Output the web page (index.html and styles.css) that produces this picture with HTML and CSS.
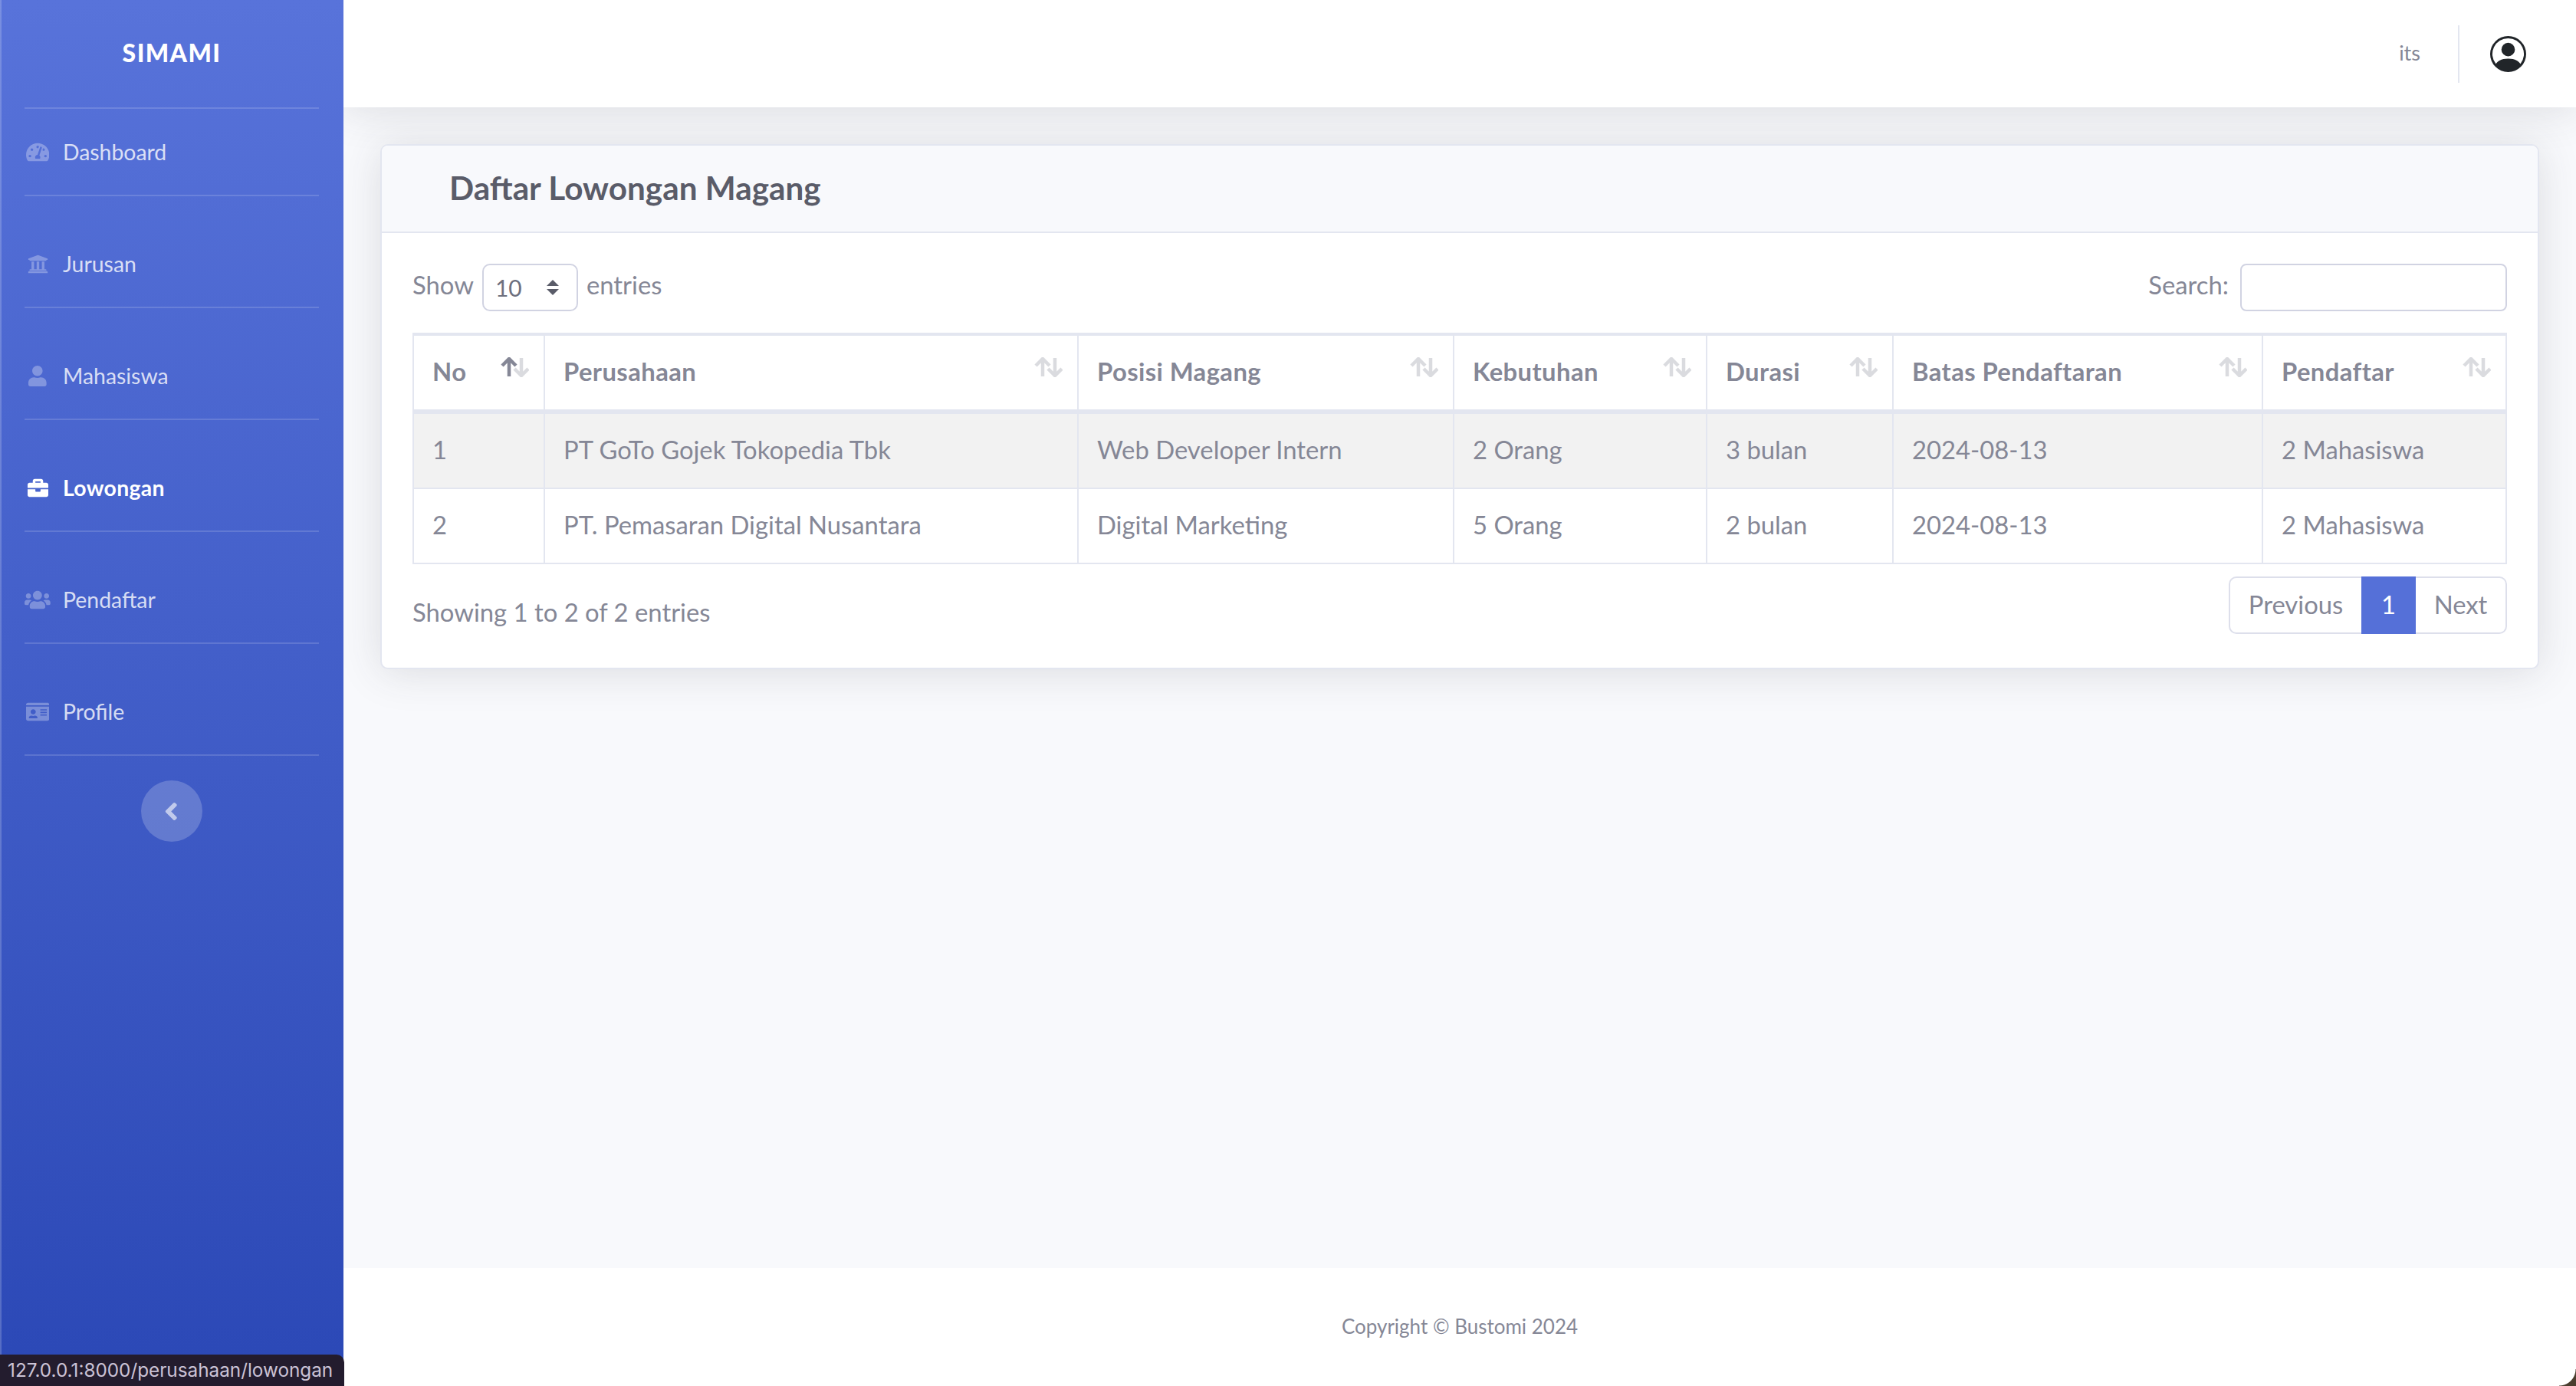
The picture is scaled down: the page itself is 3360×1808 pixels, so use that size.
FILE: index.html
```html
<!DOCTYPE html>
<html>
<head>
	<meta charset="UTF-8">
	<title>SIMAMI - Daftar Lowongan Magang</title>
	<link rel="stylesheet" href="styles.css">
</head>
<body>
	<svg class="sprite" width="0" height="0">
		<symbol id="sort" viewBox="0 0 37 26">
			<path class="up" d="M11 25V3M2 11l9-9 9 9"/>
			<path class="down" d="M27 1v22M18 15l9 9 9-9"/>
		</symbol>
	</svg>
	<div class="wrapper">
		<aside class="sidebar">
			<a class="brand" href="#">SIMAMI</a>
			<ul class="nav">
				<li class="nav-item">
					<a class="nav-link" href="#">
						<span class="nav-icon"><svg viewBox="0 0 576 512"><path d="M288 32C128.94 32 0 160.94 0 320c0 52.8 14.25 102.26 39.06 144.8 5.61 9.62 16.3 15.2 27.44 15.2h443c11.14 0 21.83-5.58 27.44-15.2C561.75 422.26 576 372.8 576 320c0-159.06-128.94-288-288-288zm0 64c14.71 0 26.58 10.13 30.32 23.65-1.11 2.26-2.64 4.23-3.45 6.67l-9.22 27.67c-5.13 3.49-10.97 6.01-17.64 6.01-17.67 0-32-14.33-32-32S270.33 96 288 96zM96 384c-17.67 0-32-14.33-32-32s14.33-32 32-32 32 14.33 32 32-14.33 32-32 32zm48-160c-17.67 0-32-14.33-32-32s14.33-32 32-32 32 14.33 32 32-14.33 32-32 32zm246.77-72.41l-61.33 184C343.13 347.33 352 364.54 352 384c0 11.72-3.38 22.55-8.88 32H232.88c-5.5-9.45-8.88-20.28-8.88-32 0-33.94 26.5-61.43 59.9-63.59l61.34-184.01c4.17-12.56 17.73-19.45 30.36-15.17 12.57 4.19 19.35 17.77 15.17 30.36zm14.66 57.2l15.52-46.55c3.47-1.29 7.13-2.23 11.05-2.23 17.67 0 32 14.33 32 32s-14.33 32-32 32c-11.38-.01-20.89-6.28-26.57-15.22zM480 384c-17.67 0-32-14.33-32-32s14.33-32 32-32 32 14.33 32 32-14.33 32-32 32z"/></svg></span>
						<span>Dashboard</span>
					</a>
				</li>
				<li class="nav-item">
					<a class="nav-link" href="#">
						<span class="nav-icon"><svg viewBox="0 0 512 512"><path d="M496 128v16a8 8 0 0 1-8 8h-24v12c0 6.627-5.373 12-12 12H60c-6.627 0-12-5.373-12-12v-12H24a8 8 0 0 1-8-8v-16a8 8 0 0 1 4.941-7.392l232-88a7.996 7.996 0 0 1 6.118 0l232 88A8 8 0 0 1 496 128zm-24 304H40c-13.255 0-24 10.745-24 24v16a8 8 0 0 0 8 8h464a8 8 0 0 0 8-8v-16c0-13.255-10.745-24-24-24zM96 192v192H60c-6.627 0-12 5.373-12 12v20h416v-20c0-6.627-5.373-12-12-12h-36V192h-64v192h-64V192h-64v192h-64V192H96z"/></svg></span>
						<span>Jurusan</span>
					</a>
				</li>
				<li class="nav-item">
					<a class="nav-link" href="#">
						<span class="nav-icon"><svg viewBox="0 0 448 512"><path d="M224 256c70.7 0 128-57.3 128-128S294.7 0 224 0 96 57.3 96 128s57.3 128 128 128zm89.6 32h-16.7c-22.2 10.2-46.9 16-72.9 16s-50.6-5.8-72.9-16h-16.7C60.2 288 0 348.2 0 422.4V464c0 26.5 21.5 48 48 48h352c26.5 0 48-21.5 48-48v-41.6c0-74.2-60.2-134.4-134.4-134.4z"/></svg></span>
						<span>Mahasiswa</span>
					</a>
				</li>
				<li class="nav-item active">
					<a class="nav-link" href="#">
						<span class="nav-icon"><svg viewBox="0 0 512 512"><path d="M320 336c0 8.84-7.16 16-16 16h-96c-8.84 0-16-7.16-16-16v-48H0v144c0 25.6 22.4 48 48 48h416c25.6 0 48-22.4 48-48V288H320v48zm144-208h-80V80c0-25.6-22.4-48-48-48H176c-25.6 0-48 22.4-48 48v48H48c-25.6 0-48 22.4-48 48v80h512v-80c0-25.6-22.4-48-48-48zm-144 0H192V96h128v32z"/></svg></span>
						<span>Lowongan</span>
					</a>
				</li>
				<li class="nav-item">
					<a class="nav-link" href="#">
						<span class="nav-icon"><svg viewBox="0 0 640 512"><path d="M96 224c35.3 0 64-28.7 64-64s-28.7-64-64-64-64 28.7-64 64 28.7 64 64 64zm448 0c35.3 0 64-28.7 64-64s-28.7-64-64-64-64 28.7-64 64 28.7 64 64 64zm32 32h-64c-17.6 0-33.5 7.1-45.1 18.6 40.3 22.1 68.9 62 75.1 109.4h66c17.7 0 32-14.3 32-32v-32c0-35.3-28.7-64-64-64zm-256 0c61.9 0 112-50.1 112-112S381.9 32 320 32 208 82.1 208 144s50.1 112 112 112zm76.8 32h-8.3c-20.8 10-43.9 16-68.5 16s-47.6-6-68.5-16h-8.3C179.6 288 128 339.6 128 403.2V432c0 26.5 21.5 48 48 48h288c26.5 0 48-21.5 48-48v-28.8c0-63.6-51.6-115.2-115.2-115.2zm-223.7-13.4C161.5 263.1 145.6 256 128 256H64c-35.3 0-64 28.7-64 64v32c0 17.7 14.3 32 32 32h65.9c6.3-47.4 34.9-87.3 75.2-109.4z"/></svg></span>
						<span>Pendaftar</span>
					</a>
				</li>
				<li class="nav-item">
					<a class="nav-link" href="#">
						<span class="nav-icon"><svg viewBox="0 0 576 512"><path d="M528 32H48C21.5 32 0 53.5 0 80v16h576V80c0-26.5-21.5-48-48-48zM0 432c0 26.5 21.500 48 48 48h480c26.500 0 48-21.500 48-48V128H0v304zm352-232c0-4.400 3.600-8 8-8h144c4.400 0 8 3.600 8 8v16c0 4.400-3.600 8-8 8H360c-4.400 0-8-3.600-8-8v-16zm0 64c0-4.400 3.600-8 8-8h144c4.400 0 8 3.600 8 8v16c0 4.400-3.600 8-8 8H360c-4.400 0-8-3.600-8-8v-16zm0 64c0-4.400 3.600-8 8-8h144c4.400 0 8 3.600 8 8v16c0 4.400-3.600 8-8 8H360c-4.400 0-8-3.600-8-8v-16zM176 192c35.300 0 64 28.700 64 64s-28.700 64-64 64-64-28.700-64-64 28.700-64 64-64zM67.100 396.200C75.500 370.500 99.600 352 128 352h8.200c12.300 5.100 25.700 8 39.800 8s27.600-2.900 39.800-8h8.200c28.400 0 52.500 18.500 60.900 44.200 3.200 9.900-5.200 19.800-15.600 19.800H82.700c-10.400 0-18.800-10-15.600-19.800z"/></svg></span>
						<span>Profile</span>
					</a>
				</li>
			</ul>
			<button class="sidebar-toggle" type="button">
				<svg viewBox="0 0 256 512"><path d="M31.700 239l136-136c9.400-9.400 24.600-9.400 33.900 0l22.600 22.600c9.400 9.400 9.400 24.600 0 33.900L127.900 256l96.400 96.400c9.400 9.400 9.400 24.600 0 33.900L201.700 409c-9.400 9.400-24.600 9.400-33.900 0l-136-136c-9.500-9.400-9.500-24.600-.1-34z"/></svg>
			</button>
		</aside>

		<div class="main">
			<header class="topbar">
				<span class="user-name">its</span>
				<span class="topbar-divider"></span>
				<svg class="user-icon" viewBox="0 0 16 16">
					<path d="M11 6a3 3 0 1 1-6 0 3 3 0 0 1 6 0"/>
					<path fill-rule="evenodd" d="M0 8a8 8 0 1 1 16 0A8 8 0 0 1 0 8m8-7a7 7 0 0 0-5.468 11.37C3.242 11.226 4.805 10 8 10s4.757 1.225 5.468 2.37A7 7 0 0 0 8 1"/>
				</svg>
			</header>

			<div class="content">
				<section class="card">
					<div class="card-header">
						<h1>Daftar Lowongan Magang</h1>
					</div>
					<div class="card-body">
						<div class="table-tools">
							<label class="length">
								Show
								<span class="select-wrap">
									<select>
										<option>10</option>
									</select>
									<svg class="select-arrows" viewBox="0 0 16 20"><path d="M8 0l8 8H0zM8 20L0 12h16z"/></svg>
								</span>
								entries
							</label>
							<label class="search">
								Search:
								<input type="text">
							</label>
						</div>

						<table class="data-table">
							<thead>
								<tr>
									<th class="col-no sorted">No<svg class="sort-icon"><use href="#sort"/></svg></th>
									<th class="col-company">Perusahaan<svg class="sort-icon"><use href="#sort"/></svg></th>
									<th class="col-position">Posisi Magang<svg class="sort-icon"><use href="#sort"/></svg></th>
									<th class="col-need">Kebutuhan<svg class="sort-icon"><use href="#sort"/></svg></th>
									<th class="col-duration">Durasi<svg class="sort-icon"><use href="#sort"/></svg></th>
									<th class="col-deadline">Batas Pendaftaran<svg class="sort-icon"><use href="#sort"/></svg></th>
									<th class="col-applicants">Pendaftar<svg class="sort-icon"><use href="#sort"/></svg></th>
								</tr>
							</thead>
							<tbody>
								<tr class="odd">
									<td>1</td>
									<td>PT GoTo Gojek Tokopedia Tbk</td>
									<td>Web Developer Intern</td>
									<td>2 Orang</td>
									<td>3 bulan</td>
									<td>2024-08-13</td>
									<td>2 Mahasiswa</td>
								</tr>
								<tr>
									<td>2</td>
									<td>PT. Pemasaran Digital Nusantara</td>
									<td>Digital Marketing</td>
									<td>5 Orang</td>
									<td>2 bulan</td>
									<td>2024-08-13</td>
									<td>2 Mahasiswa</td>
								</tr>
							</tbody>
						</table>

						<div class="table-foot">
							<div class="info">Showing 1 to 2 of 2 entries</div>
							<ul class="pagination">
								<li class="page-prev">Previous</li>
								<li class="page-current">1</li>
								<li class="page-next">Next</li>
							</ul>
						</div>
					</div>
				</section>
			</div>

			<footer class="footer">Copyright © Bustomi 2024</footer>
		</div>
	</div>

	<div class="status-bar">127.0.0.1:8000/perusahaan/lowongan</div>
	<div class="window-corner"></div>
</body>
</html>
```

FILE: styles.css
```css
* {
	box-sizing: border-box;
}

html, body {
	height: 100%;
}

body {
	margin: 0;
	font-family: Lato, "Noto Sans", sans-serif;
	font-size: 32.8px;
	color: #858796;
	background-color: #f8f9fc;
	overflow: hidden;
}

.sprite {
	position: absolute;
}

.wrapper {
	display: flex;
	height: 100%;
}

/* Sidebar */
.sidebar {
	display: flex;
	flex-direction: column;
	width: 448px;
	flex-shrink: 0;
	padding: 0 32px;
	background: linear-gradient(180deg, #5873da 0%, #2b48b6 100%);
	box-shadow: inset 2px 0 0 rgba(255, 255, 255, 0.2);
	position: relative;
	z-index: 2;
}

.brand {
	display: flex;
	justify-content: center;
	align-items: center;
	height: 140px;
	padding-bottom: 4px;
	font-size: 32px;
	font-weight: 900;
	letter-spacing: 1.4px;
	color: #fff;
	text-decoration: none;
}

.nav {
	list-style: none;
	margin: 0;
	padding: 0;
	border-bottom: 2px solid rgba(255, 255, 255, 0.15);
}

.nav-item {
	border-top: 2px solid rgba(255, 255, 255, 0.15);
}

.nav-item + .nav-item .nav-link {
	margin-top: 32px;
}

.nav-link {
	display: flex;
	align-items: center;
	gap: 16px;
	height: 112px;
	font-size: 28.4px;
	color: rgba(255, 255, 255, 0.8);
	text-decoration: none;
}

.nav-icon {
	display: flex;
	justify-content: center;
	width: 34px;
}

.nav-icon svg {
	height: 27px;
	fill: rgba(255, 255, 255, 0.3);
}

.nav-item.active .nav-link {
	font-weight: 700;
	letter-spacing: 0.3px;
	color: #fff;
}

.nav-item.active svg {
	fill: #fff;
}

.sidebar-toggle {
	display: flex;
	justify-content: center;
	align-items: center;
	align-self: center;
	width: 80px;
	height: 80px;
	margin-top: 32px;
	padding: 0 2px 0 0;
	border: 0;
	border-radius: 50%;
	background-color: rgba(255, 255, 255, 0.2);
}

.sidebar-toggle svg {
	height: 37px;
	fill: rgba(255, 255, 255, 0.6);
}

/* Main */
.main {
	display: flex;
	flex-direction: column;
	flex: 1;
	min-width: 0;
}

.topbar {
	display: flex;
	align-items: center;
	justify-content: flex-end;
	flex-shrink: 0;
	height: 140px;
	padding-right: 65px;
	background-color: #fff;
	box-shadow: 0 4px 54px rgba(58, 59, 69, 0.15);
}

.user-name {
	padding-bottom: 3px;
	font-size: 27px;
}

.topbar-divider {
	width: 2px;
	height: 75px;
	margin: 0 40px 0 49px;
	background-color: #e3e6f0;
}

.user-icon {
	width: 47px;
	height: 47px;
	fill: #212529;
}

.content {
	flex: 1;
	padding: 48px 48px 0;
}

/* Card */
.card {
	border: 2px solid #e3e6f0;
	border-radius: 10px;
	background-color: #fff;
	box-shadow: 0 4px 54px rgba(58, 59, 69, 0.15);
	overflow: hidden;
}

.card-header {
	display: flex;
	align-items: center;
	height: 114px;
	padding: 0 0 4px 88px;
	background-color: #f8f9fc;
	border-bottom: 2px solid #e3e6f0;
}

.card-header h1 {
	margin: 0;
	font-size: 42.3px;
	font-weight: 700;
	color: #5a5c69;
}

.card-body {
	padding: 40px 40px 44px;
}

.table-tools {
	display: flex;
	justify-content: space-between;
	align-items: flex-start;
	height: 62px;
}

.length, .search {
	display: flex;
	align-items: flex-start;
	gap: 11px;
	line-height: 56px;
}

.search {
	gap: 15px;
}

.select-wrap {
	position: relative;
	display: block;
}

.select-wrap select {
	display: block;
	width: 125px;
	height: 62px;
	padding: 0 0 0 15px;
	border: 2px solid #d1d3e2;
	border-radius: 10px;
	background-color: #fff;
	font: inherit;
	font-size: 30px;
	color: #6e707e;
	appearance: none;
}

.select-arrows {
	position: absolute;
	top: 21px;
	right: 25px;
	width: 16px;
	height: 20px;
	fill: #5a5c69;
	pointer-events: none;
}

.search input {
	width: 348px;
	height: 62px;
	border: 2px solid #d1d3e2;
	border-radius: 8px;
	background-color: #fff;
}

/* Tabel */
.data-table {
	width: 100%;
	margin-top: 28px;
	border-collapse: separate;
	border-spacing: 0;
	table-layout: fixed;
	border: 2px solid #e3e6f0;
}

.data-table th, .data-table td {
	padding: 0 24px 3px;
	text-align: left;
	border-right: 2px solid #e3e6f0;
}

.data-table th:last-child, .data-table td:last-child {
	border-right: 0;
}

.data-table th {
	position: relative;
	height: 104px;
	border-top: 2px solid #e3e6f0;
	border-bottom: 6px solid #e3e6f0;
	font-weight: 700;
	letter-spacing: 0.4px;
}

.data-table td {
	height: 96px;
}

.data-table tbody tr:first-child td {
	height: 98px;
	border-bottom: 2px solid #e3e6f0;
}

.data-table tr.odd td {
	background-color: #f2f2f2;
}

.col-no { width: 171px; }
.col-company { width: 696px; }
.col-position { width: 490px; }
.col-need { width: 330px; }
.col-duration { width: 243px; }
.col-deadline { width: 482px; }
.col-applicants { width: 316px; }

.sort-icon {
	position: absolute;
	top: 28px;
	right: 19px;
	width: 37px;
	height: 26px;
}

.up, .down {
	fill: none;
	stroke: #858796;
	stroke-width: 4.5;
	opacity: 0.3;
}

.up {
	opacity: var(--up-opacity, 0.3);
}

.sorted {
	--up-opacity: 1;
}

/* Pie de tabla */
.table-foot {
	display: flex;
	justify-content: space-between;
	align-items: flex-start;
	margin-top: 16px;
}

.info {
	padding-top: 27px;
}

.pagination {
	display: flex;
	list-style: none;
	margin: 0;
	padding: 0;
	height: 75px;
}

.pagination li {
	display: flex;
	justify-content: center;
	align-items: center;
	padding-bottom: 2px;
	border: 2px solid #dddfeb;
}

.page-prev {
	width: 173px;
	border-right: 0 !important;
	border-radius: 10px 0 0 10px;
}

.page-current {
	width: 71px;
	border-color: #5570d8 !important;
	background-color: #5570d8;
	color: #fff;
}

.page-next {
	width: 119px;
	border-left: 0 !important;
	border-radius: 0 10px 10px 0;
}

/* Footer */
.footer {
	display: flex;
	justify-content: center;
	align-items: center;
	flex-shrink: 0;
	height: 154px;
	padding-bottom: 2px;
	font-size: 26px;
	background-color: #fff;
}

/* Barra de estado del navegador */
.status-bar {
	position: absolute;
	left: 0;
	bottom: 0;
	z-index: 3;
	width: 449px;
	height: 41px;
	padding-left: 10px;
	border-radius: 0 10px 0 0;
	background-color: #231c2e;
	color: #cbc3d6;
	font-family: Inter, sans-serif;
	font-size: 24.3px;
	line-height: 41px;
	white-space: nowrap;
}

.window-corner {
	position: absolute;
	right: 0;
	bottom: 0;
	width: 22px;
	height: 22px;
	background: radial-gradient(circle at 0 0, transparent 21px, #4a3d2e 22px);
}
```
